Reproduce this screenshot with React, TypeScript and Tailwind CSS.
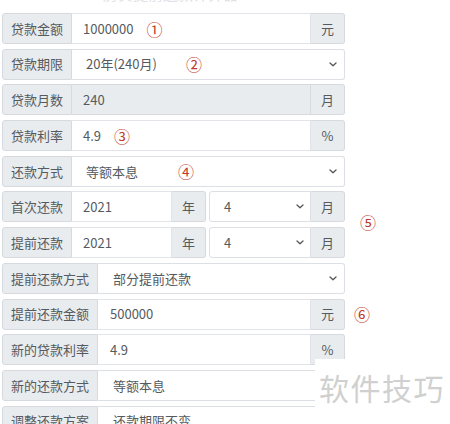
import React from "react";

const font = { fontFamily: '"Noto Sans CJK SC", "Noto Sans", sans-serif' };

function Chevron() {
  return (
    <svg width="8" height="5" viewBox="0 0 8 5" className="shrink-0">
      <path d="M1 1 L4 3.8 L7 1" fill="none" stroke="#555" strokeWidth="1.3" strokeLinecap="round" strokeLinejoin="round" />
    </svg>
  );
}

function Label({ w, children }: { w: string; children: React.ReactNode }) {
  return (
    <div className={`${w} shrink-0 flex items-center justify-center bg-[#e9ecef] border border-[#d6dadf] rounded-l-[3px] text-[13px] text-[#555a60]`}>
      {children}
    </div>
  );
}

function Unit({ children, last = true }: { children: React.ReactNode; last?: boolean }) {
  return (
    <div className={`w-[34px] shrink-0 flex items-center justify-center bg-[#e9ecef] border border-l-0 border-[#d6dadf] ${last ? "rounded-r-[3px]" : ""} text-[13px] text-[#555a60]`}>
      {children}
    </div>
  );
}

function Mark({ children, className = "" }: { children: React.ReactNode; className?: string }) {
  return <span className={`text-[16px] leading-none text-[#c0392b] ${className}`}>{children}</span>;
}

export default function App() {
  return (
    <div className="w-[450px] h-[424px] relative overflow-hidden bg-white" style={font}>
      <div className="-mt-[15px] mb-[11px] pl-[103px] text-[15px] leading-[17px] text-[#dfe2e6]">房贷提前还款计算器</div>
      <div className="flex flex-col gap-[4.7px] pl-[2px]">
        {/* 1 */}
        <div className="flex h-[31px] w-[343px]">
          <Label w="w-[70px]">贷款金额</Label>
          <div className="flex-1 flex items-center border border-l-0 border-[#e1e4e8] pl-[11px] text-[13px] text-[#555a60]">
            1000000
            <Mark className="ml-[13px]">①</Mark>
          </div>
          <Unit>元</Unit>
        </div>
        {/* 2 */}
        <div className="flex h-[31px] w-[343px]">
          <Label w="w-[70px]">贷款期限</Label>
          <div className="flex-1 flex items-center border border-l-0 border-[#dcdfe3] rounded-r-[3px] pl-[14px] pr-[7px] text-[13px] text-[#555a60]">
            20年(240月)
            <Mark className="ml-[29px]">②</Mark>
            <span className="flex-1" />
            <Chevron />
          </div>
        </div>
        {/* 3 */}
        <div className="flex h-[31px] w-[343px]">
          <Label w="w-[70px]">贷款月数</Label>
          <div className="flex-1 flex items-center bg-[#e9ecef] border border-l-0 border-[#d6dadf] pl-[11px] text-[13px] text-[#555a60]">
            240
          </div>
          <Unit>月</Unit>
        </div>
        {/* 4 */}
        <div className="flex h-[31px] w-[343px]">
          <Label w="w-[70px]">贷款利率</Label>
          <div className="flex-1 flex items-center border border-l-0 border-[#e1e4e8] pl-[11px] text-[13px] text-[#555a60]">
            4.9
            <Mark className="ml-[13px]">③</Mark>
          </div>
          <Unit>%</Unit>
        </div>
        {/* 5 */}
        <div className="flex h-[31px] w-[343px]">
          <Label w="w-[70px]">还款方式</Label>
          <div className="flex-1 flex items-center border border-l-0 border-[#dcdfe3] rounded-r-[3px] pl-[14px] pr-[7px] text-[13px] text-[#555a60]">
            等额本息
            <Mark className="ml-[40px]">④</Mark>
            <span className="flex-1" />
            <Chevron />
          </div>
        </div>
        {/* 6-7 */}
        <div className="flex items-center">
          <div className="flex flex-col gap-[4.7px]">
            {["首次还款", "提前还款"].map((l) => (
              <div key={l} className="flex h-[31px] w-[343px]">
                <Label w="w-[70px]">{l}</Label>
                <div className="w-[100px] shrink-0 flex items-center border border-l-0 border-[#e1e4e8] pl-[11px] text-[13px] text-[#555a60]">
                  2021
                </div>
                <Unit>年</Unit>
                <div className="w-[3px] shrink-0" />
                <div className="flex-1 flex items-center border border-[#dcdfe3] rounded-l-[3px] pl-[14px] pr-[6px] text-[13px] text-[#555a60]">
                  4
                  <span className="flex-1" />
                  <Chevron />
                </div>
                <Unit>月</Unit>
              </div>
            ))}
          </div>
          <Mark className="ml-[15px] mt-[-6px]">⑤</Mark>
        </div>
        {/* 8 */}
        <div className="flex h-[31px] w-[343px]">
          <Label w="w-[96px]">提前还款方式</Label>
          <div className="flex-1 flex items-center border border-l-0 border-[#dcdfe3] rounded-r-[3px] pl-[15px] pr-[7px] text-[13px] text-[#555a60]">
            部分提前还款
            <span className="flex-1" />
            <Chevron />
          </div>
        </div>
        {/* 9 */}
        <div className="flex items-center">
          <div className="flex h-[31px] w-[343px]">
            <Label w="w-[96px]">提前还款金额</Label>
            <div className="flex-1 flex items-center border border-l-0 border-[#e1e4e8] pl-[12px] text-[13px] text-[#555a60]">
              500000
            </div>
            <Unit>元</Unit>
          </div>
          <Mark className="ml-[9px]">⑥</Mark>
        </div>
        {/* 10 */}
        <div className="flex h-[31px] w-[343px]">
          <Label w="w-[96px]">新的贷款利率</Label>
          <div className="flex-1 flex items-center border border-l-0 border-[#e1e4e8] pl-[12px] text-[13px] text-[#555a60]">
            4.9
          </div>
          <Unit>%</Unit>
        </div>
        {/* 11 */}
        <div className="flex h-[31px] w-[343px]">
          <Label w="w-[96px]">新的还款方式</Label>
          <div className="flex-1 flex items-center border border-l-0 border-[#dcdfe3] rounded-r-[3px] pl-[15px] pr-[7px] text-[13px] text-[#555a60]">
            等额本息
            <span className="flex-1" />
            <Chevron />
          </div>
        </div>
        {/* 12 */}
        <div className="flex h-[31px] w-[343px]">
          <Label w="w-[96px]">调整还款方案</Label>
          <div className="flex-1 flex items-center border border-l-0 border-[#dcdfe3] rounded-r-[3px] pl-[15px] pr-[7px] text-[13px] text-[#555a60]">
            还款期限不变
            <span className="flex-1" />
            <Chevron />
          </div>
        </div>
      </div>
      {/* watermark */}
      <div className="absolute left-[315px] top-[359px] right-0 bottom-0 bg-white pl-[4px] pt-[10px]">
        <div className="text-[30px] leading-[36px] text-[#d0d0d0] tracking-[1.5px]">软件技巧</div>
      </div>
    </div>
  );
}
